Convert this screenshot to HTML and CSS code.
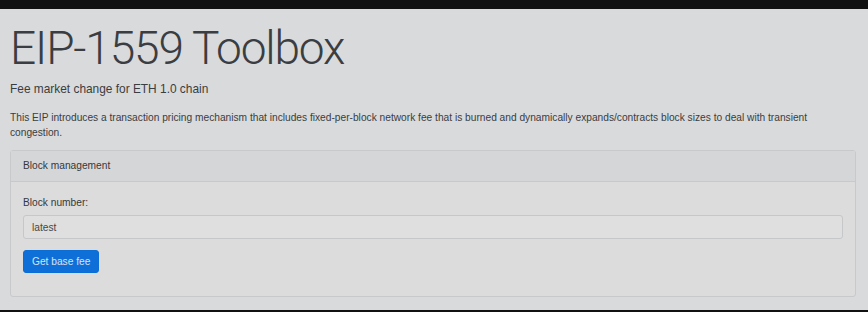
FILE: index.html
```html
<!DOCTYPE html>
<html lang="en">
<head>
<meta charset="utf-8">
<title>EIP-1559 Toolbox</title>
<link rel="stylesheet" href="styles.css">
</head>
<body>
<div class="topbar"></div>
<main class="page">
  <h1 class="title">EIP-1559 Toolbox</h1>
  <p class="lead">Fee market change for ETH 1.0 chain</p>
  <p class="intro">This EIP introduces a transaction pricing mechanism that includes fixed-per-block network fee that is burned and dynamically expands/contracts block sizes to deal with transient congestion.</p>
  <section class="card">
    <div class="card-header">Block management</div>
    <div class="card-body">
      <label class="field-label" for="block">Block number:</label>
      <input class="field-input" id="block" type="text" value="latest">
      <button class="btn" type="button">Get base fee</button>
    </div>
  </section>
</main>
<div class="bottombar"></div>
</body>
</html>
```

FILE: styles.css
```css
* { box-sizing: border-box; }
html, body { margin: 0; padding: 0; }
body {
  width: 868px;
  height: 312px;
  overflow: hidden;
  background: #d9dadc;
  font-family: "Liberation Sans", Arial, sans-serif;
  color: #35383b;
  display: flex;
  flex-direction: column;
}
.topbar { height: 9px; background: #111111; flex: none; }
.bottombar { height: 2px; background: #111111; flex: none; }
.page {
  flex: 1;
  padding: 0 12px 0 10px;
}
.title {
  margin: 12px 0 0;
  font-family: Roboto, "Liberation Sans", sans-serif;
  font-weight: 300;
  font-size: 46px;
  line-height: 55px;
  letter-spacing: -1.15px;
  color: #3a3d41;
}
.lead {
  margin: 4px 0 0;
  font-weight: 400;
  font-size: 11.9px;
  line-height: 19px;
  color: #3a3d41;
}
.intro {
  margin: 11px 0 0;
  font-size: 10.2px;
  line-height: 15px;
  color: #3a3d41;
}
.card {
  margin-top: 10px;
  border: 1px solid #c8c9ca;
  border-radius: 3px;
  background: #dcdcdd;
}
.card-header {
  padding: 7px 12px 8px;
  font-size: 10.2px;
  line-height: 15px;
  background: #d5d6d7;
  border-bottom: 1px solid #c8c9ca;
  color: #35383b;
}
.card-body {
  padding: 13px 12px 23px;
  display: flex;
  flex-direction: column;
  align-items: flex-start;
}
.field-label {
  font-size: 10.2px;
  line-height: 15px;
  color: #35383b;
  margin-bottom: 5px;
}
.field-input {
  width: 100%;
  height: 24px;
  padding: 0 8px;
  border: 1px solid #c6c7c8;
  border-radius: 3px;
  background: #dfdfdf;
  font-family: "Liberation Sans", Arial, sans-serif;
  font-size: 10.2px;
  color: #45484b;
  margin: 0 0 11px;
}
.btn {
  height: 23px;
  padding: 0 8px;
  border: 1px solid #0b6dd6;
  border-radius: 3px;
  background: #0e6fd8;
  color: #d6e4f4;
  font-family: "Liberation Sans", Arial, sans-serif;
  font-size: 10.2px;
  line-height: 15px;
}
```
